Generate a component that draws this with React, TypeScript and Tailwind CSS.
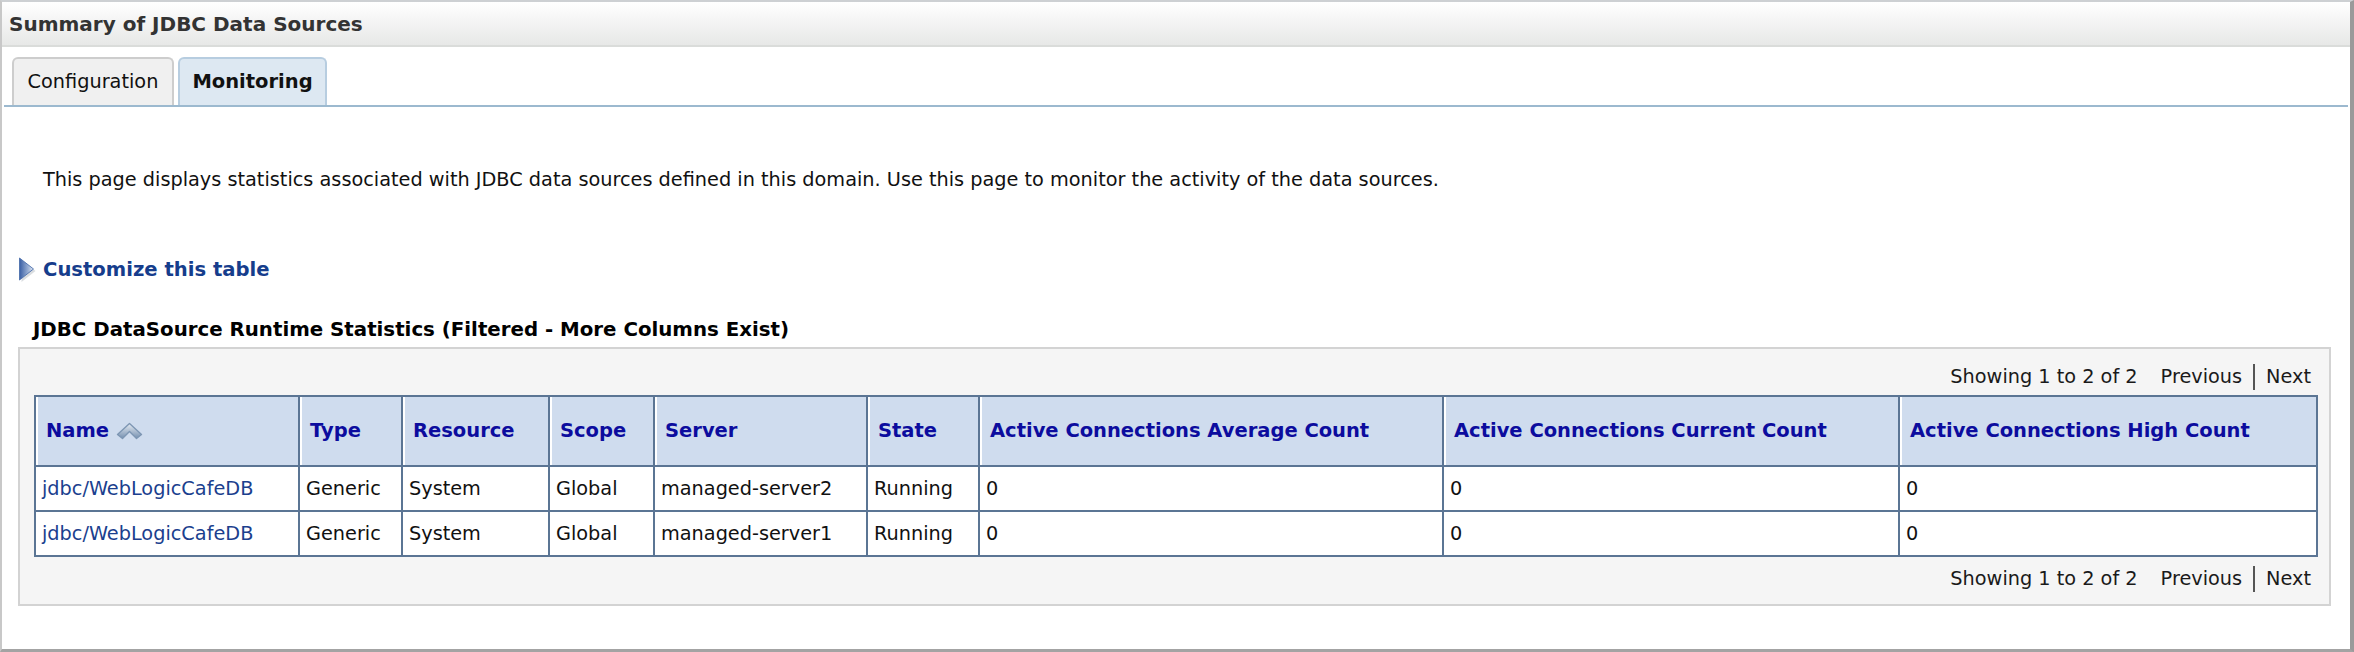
import React from "react";

const columns = [
  { label: "Name", width: 264, sort: true },
  { label: "Type", width: 103 },
  { label: "Resource", width: 147 },
  { label: "Scope", width: 105 },
  { label: "Server", width: 213 },
  { label: "State", width: 112 },
  { label: "Active Connections Average Count", width: 464 },
  { label: "Active Connections Current Count", width: 456 },
  { label: "Active Connections High Count", width: 418 },
];

const rows = [
  ["jdbc/WebLogicCafeDB", "Generic", "System", "Global", "managed-server2", "Running", "0", "0", "0"],
  ["jdbc/WebLogicCafeDB", "Generic", "System", "Global", "managed-server1", "Running", "0", "0", "0"],
];

function SortIcon() {
  return (
    <svg width="27" height="18" viewBox="0 0 27 18" className="ml-[7px] inline-block">
      <defs>
        <linearGradient id="sortg" x1="0" y1="0" x2="0" y2="1">
          <stop offset="0" stopColor="#e6ecf3" />
          <stop offset="1" stopColor="#7590b0" />
        </linearGradient>
      </defs>
      <path
        d="M1.5 12.5 L13.5 1.5 L25.5 12.5 L20.5 16.5 L13.5 9.5 L6.5 16.5 Z"
        fill="url(#sortg)"
        stroke="#7d96b3"
        strokeWidth="1.4"
        strokeLinejoin="round"
      />
    </svg>
  );
}

function ExpandIcon() {
  return (
    <svg width="20" height="28" viewBox="0 0 20 28" className="mr-[5px]">
      <defs>
        <linearGradient id="expg" x1="0" y1="0" x2="1" y2="0">
          <stop offset="0" stopColor="#3a5fa4" />
          <stop offset="0.55" stopColor="#8ea6cf" />
          <stop offset="1" stopColor="#dfe7f3" />
        </linearGradient>
      </defs>
      <path d="M3.5 4 L17.5 15 L3.5 26 Z" fill="#aeb4bb" opacity="0.45" />
      <path d="M1.5 2 L15.5 13 L1.5 24 Z" fill="url(#expg)" stroke="#4d70ad" strokeWidth="0.9" strokeLinejoin="round" />
    </svg>
  );
}

function Pager() {
  return (
    <div className="flex justify-end items-center leading-[24px] text-[#1a1a1a]">
      <span>Showing 1 to 2 of 2</span>
      <span className="ml-[23px]">Previous</span>
      <span className="mx-[11px] w-[2px] h-[26px] bg-[#555]" />
      <span>Next</span>
    </div>
  );
}

export default function App() {
  return (
    <div className="w-[2354px] h-[652px] bg-white font-['DejaVu_Sans',Verdana,sans-serif] text-[19.3px] text-black">
      <div className="h-[652px] border-t-[2px] border-t-[#cdd0d3] border-l-[2px] border-l-[#c8c8c8] border-r-[4px] border-r-[#9a9a9a] border-b-[3px] border-b-[#a3a3a3] flex flex-col">
        {/* title bar */}
        <div className="h-[45px] bg-gradient-to-b from-white via-[#f3f3f3] to-[#e7e8e7] border-b-[2px] border-[#dadcda] flex items-center pl-[7px]">
          <h1 className="font-bold text-[20px] text-[#333] leading-[24px]">Summary of JDBC Data Sources</h1>
        </div>

        {/* tabs */}
        <div className="mt-[10px] mx-[2px] flex items-end gap-[4px] pl-[8px] border-b-[2px] border-[#9cb9cf] h-[50px]">
          <div className="h-[48px] w-[162px] flex items-center justify-center rounded-t-[6px] border-[2px] border-b-0 border-[#cdcdcd] bg-[#f0f0f0] text-[#111]">
            Configuration
          </div>
          <div className="h-[48px] w-[149px] flex items-center justify-center rounded-t-[6px] border-[2px] border-b-0 border-[#b7cde0] bg-[#dde8f2] font-bold text-[19.5px] text-[#111]">
            Monitoring
          </div>
        </div>

        <p className="mt-[61px] ml-[41px] leading-[24px] text-[#111]">
          This page displays statistics associated with JDBC data sources defined in this domain. Use this page to monitor the activity of the data sources.
        </p>

        <div className="mt-[64px] ml-[16px] flex items-center h-[28px]">
          <ExpandIcon />
          <span className="font-bold text-[19.6px] text-[#163d8c] leading-[24px]">Customize this table</span>
        </div>

        <h2 className="mt-[34px] ml-[31px] font-bold text-[19.8px] leading-[24px] text-black">
          JDBC DataSource Runtime Statistics (Filtered - More Columns Exist)
        </h2>

        {/* table container */}
        <div className="mt-[5px] ml-[16px] w-[2313px] border-[2px] border-[#d3d3d3] bg-[#f5f5f5] pt-[15px] pb-[12px]">
          <div className="pr-[18px]">
            <Pager />
          </div>
          <table className="mt-[5px] ml-[14px] table-fixed border-collapse border-[2px] border-[#5b7594] w-[2282px]">
            <colgroup>
              {columns.map((c) => (
                <col key={c.label} style={{ width: c.width }} />
              ))}
            </colgroup>
            <thead>
              <tr className="h-[70px] bg-[#cfdcee]">
                {columns.map((c) => (
                  <th
                    key={c.label}
                    className="border-[2px] border-[#5b7594] shadow-[inset_2px_0_0_#ffffff] text-left font-bold text-[19.5px] text-[#0c0c9e] pl-[10px] pr-[4px] leading-[24px] whitespace-nowrap"
                  >
                    <span className="inline-flex items-center">
                      {c.label}
                      {c.sort && <SortIcon />}
                    </span>
                  </th>
                ))}
              </tr>
            </thead>
            <tbody>
              {rows.map((r, i) => (
                <tr key={i} className="h-[45px] bg-white">
                  {r.map((v, j) => (
                    <td
                      key={j}
                      className={
                        "border-[2px] border-[#5b7594] pl-[6px] leading-[24px] whitespace-nowrap " +
                        (j === 0 ? "text-[#1b3f8e]" : "text-[#111]")
                      }
                    >
                      {v}
                    </td>
                  ))}
                </tr>
              ))}
            </tbody>
          </table>
          <div className="mt-[9px] pr-[18px]">
            <Pager />
          </div>
        </div>
      </div>
    </div>
  );
}
